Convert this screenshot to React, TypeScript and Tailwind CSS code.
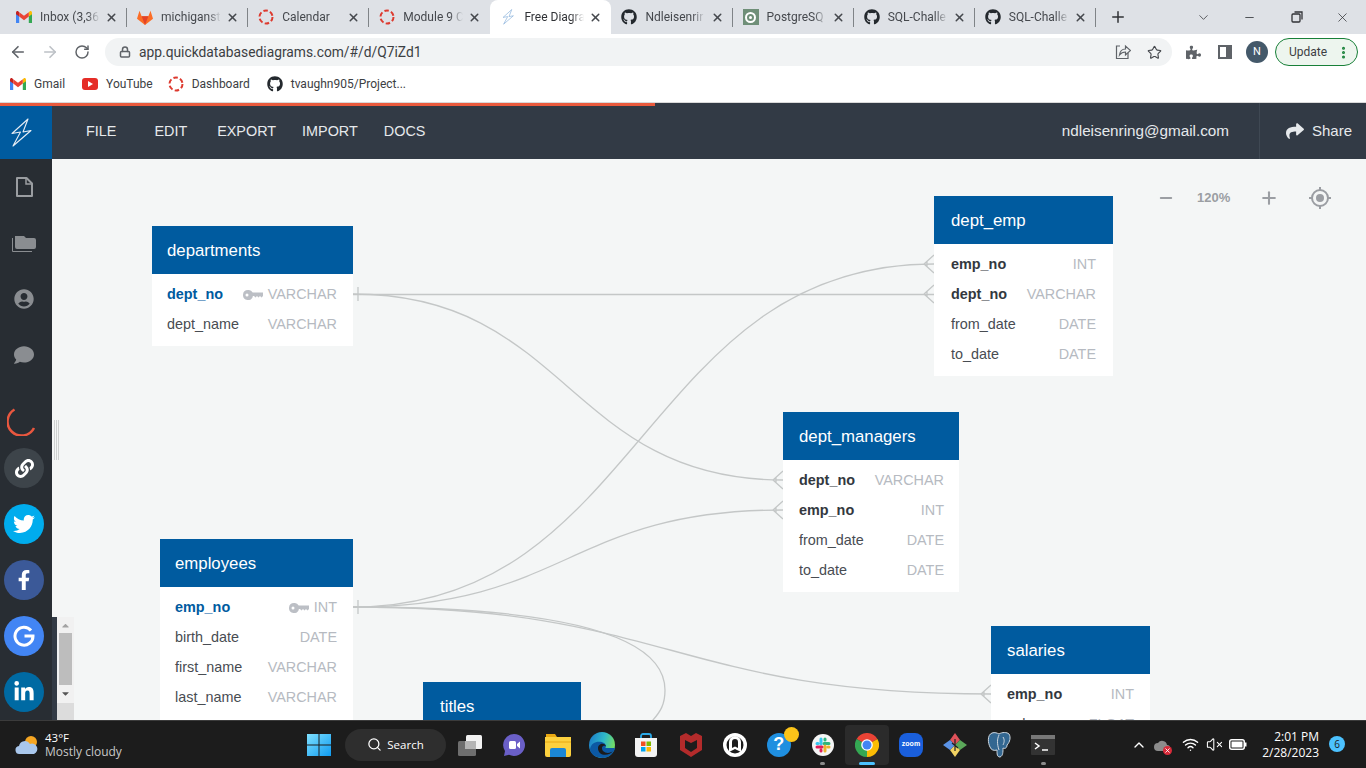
import { ArrowLeft, ArrowRight, ChevronDown, ChevronUp, Lock, Minus, MoreVertical, Plus, RotateCw, Search, Star, VolumeX, Wifi, X } from "lucide-react";
import { FaFacebookF, FaGithub, FaLinkedinIn, FaPuzzlePiece, FaShare, FaTwitter, FaUserCircle, FaComment, FaLink, FaCaretUp, FaCaretDown } from "react-icons/fa";
import { ReactNode } from "react";

const GmailIcon = ({ size = 16 }: { size?: number }) => (
  <svg width={size} height={size * 0.8} viewBox="0 0 20 16">
    <path d="M0 3v11.5A1.5 1.5 0 0 0 1.5 16H4V6z" fill="#4285f4" />
    <path d="M20 3v11.5a1.5 1.5 0 0 1-1.500 1.500H16V6z" fill="#34a853" />
    <path d="M16 1.500V7l4-3V2c0-1.800-2-2.500-3-1.500z" fill="#fbbc04" />
    <path d="M4 1.500V7L0 4V2C0 .2 2-.5 3 .5z" fill="#c5221f" />
    <path d="M4 1.500 10 6l6-4.500V7l-6 4.500L4 7z" fill="#ea4335" />
  </svg>
);

const GitlabIcon = () => (
  <svg width="18" height="17" viewBox="0 0 18 17">
    <path d="M9 17 0 10 2.800 1l2.400 6h7.600l2.400-6L18 10z" fill="#fc6d26" />
    <path d="M9 17 5.200 7h7.600z" fill="#e24329" />
  </svg>
);

const DashedRing = ({ size = 16 }: { size?: number }) => (
  <svg width={size} height={size} viewBox="0 0 16 16">
    <circle cx="8" cy="8" r="6.500" fill="none" stroke="#dd3a2f" strokeWidth="2" strokeDasharray="4.500 2.300" />
  </svg>
);

const BoltLogo = ({ size = 30, color = "#e8eef5" }: { size?: number; color?: string }) => (
  <svg width={size} height={size * 1.25} viewBox="0 0 24 30" fill="none" stroke={color} strokeWidth="1.100">
    <path d="M18 1 2 15.500l8.500-1.500L3 28 21 12.500l-8 1.500z" strokeLinejoin="round" />
  </svg>
);

const PgBox = () => (
  <span className="w-4 h-4 bg-[#6f8f78] flex items-center justify-center">
    <span className="w-[11px] h-[11px] rounded-full border-2 border-white flex items-center justify-center">
      <span className="w-[3px] h-[3px] rounded-full bg-white" />
    </span>
  </span>
);

const TABS: { title: string; icon: ReactNode; active?: boolean }[] = [
  { title: "Inbox (3,36", icon: <GmailIcon /> },
  { title: "michiganst", icon: <GitlabIcon /> },
  { title: "Calendar", icon: <DashedRing /> },
  { title: "Module 9 C", icon: <DashedRing /> },
  { title: "Free Diagra", icon: <BoltLogo size={13} color="#7aa7d6" />, active: true },
  { title: "Ndleisenrir", icon: <FaGithub size={16} color="#24292e" /> },
  { title: "PostgreSQ", icon: <PgBox /> },
  { title: "SQL-Challe", icon: <FaGithub size={16} color="#24292e" /> },
  { title: "SQL-Challe", icon: <FaGithub size={16} color="#24292e" /> },
];

type Column = { name: string; type: string; kind?: "pk" | "fk" };
type TableDef = { title: string; box: string; pad: string; rows: Column[] };

// canvas starts at x=52, y=159 of the page
const TABLES: TableDef[] = [
  {
    title: "departments",
    box: "left-[100px] top-[67px] w-[201px]",
    pad: "pl-[15px] pr-4",
    rows: [
      { name: "dept_no", type: "VARCHAR", kind: "pk" },
      { name: "dept_name", type: "VARCHAR" },
    ],
  },
  {
    title: "dept_emp",
    box: "left-[882px] top-[37px] w-[179px]",
    pad: "pl-[17px] pr-[17px]",
    rows: [
      { name: "emp_no", type: "INT", kind: "fk" },
      { name: "dept_no", type: "VARCHAR", kind: "fk" },
      { name: "from_date", type: "DATE" },
      { name: "to_date", type: "DATE" },
    ],
  },
  {
    title: "dept_managers",
    box: "left-[731px] top-[253px] w-[176px]",
    pad: "pl-4 pr-[15px]",
    rows: [
      { name: "dept_no", type: "VARCHAR", kind: "fk" },
      { name: "emp_no", type: "INT", kind: "fk" },
      { name: "from_date", type: "DATE" },
      { name: "to_date", type: "DATE" },
    ],
  },
  {
    title: "employees",
    box: "left-[108px] top-[380px] w-[193px]",
    pad: "pl-[15px] pr-4",
    rows: [
      { name: "emp_no", type: "INT", kind: "pk" },
      { name: "birth_date", type: "DATE" },
      { name: "first_name", type: "VARCHAR" },
      { name: "last_name", type: "VARCHAR" },
      { name: "gender", type: "VARCHAR" },
    ],
  },
  {
    title: "salaries",
    box: "left-[939px] top-[467px] w-[159px]",
    pad: "pl-4 pr-4",
    rows: [
      { name: "emp_no", type: "INT", kind: "fk" },
      { name: "salary", type: "FLOAT" },
    ],
  },
  {
    title: "titles",
    box: "left-[371px] top-[523px] w-[158px]",
    pad: "pl-[17px] pr-4",
    rows: [{ name: "title_id", type: "VARCHAR" }],
  },
];

const KeyIcon = () => (
  <svg width="20" height="10" viewBox="0 0 20 10" className="mr-[5px]">
    <path d="M5 0a5 5 0 0 1 4.700 2.500H20V6l-1.500 1.500L17 6l-1.500 1.500L14 6l-1.500 1.500L11 6H9.900A5 5 0 1 1 5 0zM4 3.500a1.500 1.500 0 1 0 0 3 1.500 1.500 0 0 0 0-3z" fill="#bcbfc5" fillRule="evenodd" />
  </svg>
);

function DbTable({ table }: { table: TableDef }) {
  return (
    <div className={`absolute ${table.box} bg-white font-['Liberation_Sans',sans-serif]`}>
      <div className={`h-12 bg-[#005b9f] text-white text-[16.800px] flex items-center pt-[2px] ${table.pad}`}>{table.title}</div>
      <div className="pt-[6px] pb-[6px]">
        {table.rows.map((row) => (
          <div key={row.name} className={`h-[30px] flex items-center text-[14.400px] ${table.pad}`}>
            <span
              className={
                row.kind === "pk"
                  ? "font-bold text-[#005b9f]"
                  : row.kind === "fk"
                    ? "font-bold text-[#33383e]"
                    : "text-[#484c52]"
              }
            >
              {row.name}
            </span>
            <span className="ml-auto flex items-center text-[#b6bac1]">
              {row.kind === "pk" && <KeyIcon />}
              {row.type}
            </span>
          </div>
        ))}
      </div>
    </div>
  );
}

const CrowFoot = ({ x, y }: { x: number; y: number }) => (
  <path d={`M${x - 10} ${y}L${x} ${y - 9}M${x - 10} ${y}L${x} ${y + 9}M${x - 7} ${y - 3}V${y + 3}`} />
);

function Relations() {
  return (
    <svg className="absolute inset-0" width="1314" height="561" viewBox="52 159 1314 561" fill="none" stroke="#c4c7c7" strokeWidth="1.300">
      <path d="M353 294.500H934" />
      <path d="M353 294C568 294 568 480 783 480" />
      <path d="M353 607C643 607 643 264 934 264" />
      <path d="M353 607C568 607 568 510 783 510" />
      <path d="M353 607C672 607 672 694 991 694" />
      <path d="M353 607C520 607 665 625 665 690C665 705 660 712 653 720L581 775" />
      <path d="M358 287V301" />
      <path d="M358 600V614" />
      <CrowFoot x={934} y={264} />
      <CrowFoot x={934} y={294} />
      <CrowFoot x={783} y={480} />
      <CrowFoot x={783} y={510} />
      <CrowFoot x={991} y={694} />
    </svg>
  );
}

const FileIcon = () => (
  <svg width="17" height="20" viewBox="0 0 17 20" fill="none" stroke="#9a9da1" strokeWidth="2">
    <path d="M1 1h9.500L16 6.500V19H1z" strokeLinejoin="round" />
    <path d="M10 1v6h6" strokeWidth="1.500" />
  </svg>
);

const FolderStack = () => (
  <svg width="24" height="20" viewBox="0 0 24 20">
    <path d="M3 3h9l2 2h8a2 2 0 0 1 2 2v7a2 2 0 0 1-2 2H5a2 2 0 0 1-2-2z" fill="#8a8d91" />
    <path d="M.500 5v13.500H20" fill="none" stroke="#8a8d91" />
  </svg>
);

const GoogleG = () => (
  <svg width="22" height="22" viewBox="0 0 22 22" fill="none" stroke="#fff" strokeWidth="3">
    <path d="M18 5.500A9 9 0 1 0 20 11h-8.500" />
  </svg>
);

function SocialDot({ className, children }: { className: string; children: ReactNode }) {
  return <div className={`w-10 h-10 rounded-full flex items-center justify-center text-white ${className}`}>{children}</div>;
}

function Sidebar() {
  return (
    <aside className="w-[52px] shrink-0 bg-[#282d33] flex flex-col items-center pt-[18px] text-[#8a8d91]">
      <div className="flex flex-col items-center gap-9 mr-[4px]">
        <FileIcon />
        <FolderStack />
        <FaUserCircle size={20} />
        <FaComment size={20} />
      </div>
      <svg width="30" height="30" viewBox="0 0 30 30" fill="none" stroke="#e9573f" strokeWidth="2.500" className="mt-[41px] mr-[8px]">
        <path d="M7.500 3.500A14 14 0 1 0 27 22" />
      </svg>
      <div className="mt-3 flex flex-col gap-4 mr-[4px]">
        <SocialDot className="bg-[#3d444a]"><FaLink size={19} /></SocialDot>
        <SocialDot className="bg-[#00aced]"><FaTwitter size={22} /></SocialDot>
        <SocialDot className="bg-[#3b5998]"><FaFacebookF size={20} /></SocialDot>
        <SocialDot className="bg-[#4285f4]"><GoogleG /></SocialDot>
        <SocialDot className="bg-[#006aa3]"><FaLinkedinIn size={22} /></SocialDot>
      </div>
    </aside>
  );
}

function Canvas() {
  return (
    <main className="relative flex-1 bg-[#f4f6f6] overflow-hidden font-['Liberation_Sans',sans-serif]">
      <Relations />
      {TABLES.map((t) => (
        <DbTable key={t.title} table={t} />
      ))}
      {/* zoom controls */}
      <div className="absolute top-[28px] left-[1105px] flex items-center text-[#9b9ea3]">
        <Minus size={18} strokeWidth={2.500} />
        <span className="ml-[22px] w-[40px] text-[13px] font-bold">120%</span>
        <Plus size={20} strokeWidth={2.500} className="ml-[22px]" />
        <svg width="22" height="22" viewBox="0 0 22 22" fill="none" stroke="currentColor" strokeWidth="2" className="ml-[30px]">
          <circle cx="11" cy="11" r="8" />
          <circle cx="11" cy="11" r="4" fill="currentColor" stroke="none" />
          <path d="M11 0v3M11 19v3M0 11h3M19 11h3" />
        </svg>
      </div>
      {/* panel splitter */}
      <div className="absolute left-[2px] top-[261px] h-10 w-[5px] flex justify-between">
        <span className="w-px bg-[#cfd2d2]" />
        <span className="w-px bg-[#cfd2d2]" />
        <span className="w-px bg-[#cfd2d2]" />
      </div>
      {/* embedded scroller */}
      <div className="absolute left-0 top-[458px] h-[103px] w-[22px] flex">
        <div className="w-[5px] bg-[#323a45]" />
        <div className="flex-1 flex flex-col">
          <div className="h-[86px] bg-[#f1f1f1] flex flex-col items-center text-[#a3a3a3]">
            <FaCaretUp size={11} className="mt-[3px] mb-[2px]" />
            <div className="w-[13px] h-[52px] bg-[#bdbdbd]" />
            <FaCaretDown size={11} className="mt-[3px] text-[#555]" />
          </div>
          <div className="flex-1 bg-[#dcdcdc]" />
        </div>
      </div>
    </main>
  );
}

/* ---- taskbar icons ---- */

const WindowsIcon = () => (
  <svg width="24" height="24" viewBox="0 0 24 24">
    <defs>
      <linearGradient id="win" x1="0" y1="0" x2="1" y2="1">
        <stop offset="0" stopColor="#7fe0ff" />
        <stop offset="1" stopColor="#0f9bf0" />
      </linearGradient>
    </defs>
    <path d="M0 1h11.500v10.500H0zM12.500 1H24v10.500H12.500zM0 12.500h11.500V23H0zM12.500 12.500H24V23H12.500z" fill="url(#win)" />
  </svg>
);

const TaskView = () => (
  <svg width="24" height="22" viewBox="0 0 24 22">
    <rect x="8" y="1" width="16" height="14" rx="1.500" fill="#f2f2f2" />
    <rect x="0" y="7" width="18" height="15" rx="1.500" fill="#6e6e6e" />
    <rect x="7" y="7" width="11" height="8" fill="#b5b5b5" />
  </svg>
);

const TeamsIcon = () => (
  <svg width="24" height="24" viewBox="0 0 24 24">
    <path d="M12 1a11 11 0 1 1-5 20.800L2 23l1-5A11 11 0 0 1 12 1z" fill="#6a5fc7" />
    <rect x="7" y="8" width="7" height="8" rx="1.500" fill="#fff" />
    <path d="M15 11l3-2.500v7L15 13z" fill="#fff" />
  </svg>
);

const ExplorerIcon = () => (
  <svg width="26" height="24" viewBox="0 0 26 24">
    <path d="M1 1h9l2 3h-11z" fill="#e8a812" />
    <path d="M0 4h26v18a2 2 0 0 1-2 2H2a2 2 0 0 1-2-2z" fill="#fcd13f" />
    <path d="M0 9h26" stroke="#e8a812" strokeWidth="1" />
    <path d="M5 17a2 2 0 0 1 2-2h12a2 2 0 0 1 2 2v7H5z" fill="#1b87d6" />
  </svg>
);

const EdgeIcon = () => (
  <svg width="26" height="26" viewBox="0 0 26 26">
    <defs>
      <linearGradient id="edge" x1="0" y1="0" x2="1" y2="0.300">
        <stop offset="0" stopColor="#1976c9" />
        <stop offset="0.600" stopColor="#2fb9c9" />
        <stop offset="1" stopColor="#6fdb6a" />
      </linearGradient>
    </defs>
    <circle cx="13" cy="13" r="13" fill="url(#edge)" />
    <path d="M1 17C2 10 10 8 15 11c3 2 2 5 1 5h10c-1 6-7 10-12 10C7 26 1 22 1 17z" fill="#0c59a4" />
    <path d="M9 16c0-4 6-6 8-2-4-1-5 2-3 5 3 3 8 2 10 0-3 5-15 6-15-3z" fill="#1b1b1b" />
  </svg>
);

const StoreIcon = () => (
  <svg width="24" height="24" viewBox="0 0 24 24">
    <path d="M7 6V3a2 2 0 0 1 2-2h6a2 2 0 0 1 2 2v3" fill="none" stroke="#2aa9e8" strokeWidth="1.800" />
    <path d="M1 5h22v16a3 3 0 0 1-3 3H4a3 3 0 0 1-3-3z" fill="#f3f3f3" />
    <rect x="7" y="8.500" width="4.500" height="4.500" fill="#f25022" />
    <rect x="12.500" y="8.500" width="4.500" height="4.500" fill="#7fba00" />
    <rect x="7" y="14" width="4.500" height="4.500" fill="#00a4ef" />
    <rect x="12.500" y="14" width="4.500" height="4.500" fill="#ffb900" />
  </svg>
);

const McafeeIcon = () => (
  <svg width="22" height="24" viewBox="0 0 22 24">
    <path d="M0 3l6-3 5 3 5-3 6 3v14l-11 7L0 17z" fill="#b32b2b" />
    <path d="M5 7l6 3 6-3v8l-6 4-6-4z" fill="#1c1c1c" />
  </svg>
);

const ArchIcon = () => (
  <svg width="24" height="24" viewBox="0 0 24 24" fill="none">
    <circle cx="12" cy="12" r="12" fill="#fff" />
    <circle cx="12" cy="12" r="8.500" fill="#1c1c1c" />
    <path d="M6 19V9a6 6 0 0 1 12 0v10l-6-3z" fill="#fff" />
    <path d="M9 15V9a3 3 0 0 1 6 0v6l-3-1.500z" fill="#1c1c1c" />
  </svg>
);

const HelpIcon = () => (
  <span className="relative flex w-6 h-6 items-center justify-center rounded-full bg-[#1f8fe0] text-white text-[18px] font-bold font-['Liberation_Sans',sans-serif]">
    ?
    <span className="absolute -top-[6px] -right-[8px] w-[15px] h-[15px] rounded-full bg-[#fcc419]" />
  </span>
);

const SlackIcon = () => (
  <svg width="22" height="22" viewBox="0 0 22 22" fill="none" strokeWidth="3" strokeLinecap="round">
    <circle cx="11" cy="11" r="11" fill="#f5f5f5" />
    <path d="M9 5v5M5 9.500h1" stroke="#36c5f0" />
    <path d="M17 9.500h-5M13 5v1" stroke="#2eb67d" />
    <path d="M13 17v-5M17 13h-1" stroke="#ecb22e" />
    <path d="M5 13h5M9 17v-1" stroke="#e01e5a" />
  </svg>
);

const ChromeIcon = () => (
  <svg width="24" height="24" viewBox="0 0 24 24">
    <path d="M12 12L1.600 6A12 12 0 0 1 22.400 6z" fill="#ea4335" />
    <path d="M12 12L22.400 6A12 12 0 0 1 12 24z" fill="#fbbc04" />
    <path d="M12 12L12 24A12 12 0 0 1 1.600 6z" fill="#34a853" />
    <circle cx="12" cy="12" r="5.800" fill="#fff" />
    <circle cx="12" cy="12" r="4.500" fill="#4285f4" />
  </svg>
);

const ZoomIcon = () => (
  <span className="w-6 h-6 rounded-lg bg-[#1a5fdc] flex items-center justify-center text-white text-[7px] font-bold font-['Liberation_Sans',sans-serif]">
    zoom
  </span>
);

const GitkrakenIcon = () => (
  <svg width="24" height="24" viewBox="0 0 24 24">
    <path d="M12 0l5 7-5 5-5-5z" fill="#e0525a" />
    <path d="M12 12l5-5 7 5-7 5z" fill="#5ba85a" />
    <path d="M12 12l5 5-5 7-5-7z" fill="#f2d262" />
    <path d="M12 12l-5 5-7-5 7-5z" fill="#5b93e6" />
    <path d="M12 6v12M9 10l6 5" stroke="#222" strokeWidth="1.200" />
  </svg>
);

const PostgresIcon = () => (
  <svg width="24" height="26" viewBox="0 0 24 26">
    <path d="M5 1c3-1 5 0 7 1 3-2 8-2 10 0 2 3 1 8-2 11 0 3-2 4-4 3 0 4 0 8-3 9-3 0-3-3-3-7-3 1-6 0-7-3C1 11 0 3 5 1z" fill="#336791" stroke="#cfd8e0" strokeWidth="1" />
    <path d="M12 3c-2 4-2 9 0 15M16 5c2 3 1 6 0 8" fill="none" stroke="#cfd8e0" strokeWidth="1" />
  </svg>
);

const TerminalIcon = () => (
  <svg width="24" height="20" viewBox="0 0 24 20">
    <rect width="24" height="20" rx="1" fill="#333" />
    <rect width="24" height="4" fill="#777" />
    <path d="M4 8l4 3-4 3" fill="none" stroke="#fff" strokeWidth="1.500" />
    <path d="M11 15h6" stroke="#fff" strokeWidth="1.500" />
  </svg>
);

const TASK_ICONS: { icon: ReactNode; dot?: boolean; active?: boolean }[] = [
  { icon: <TaskView /> },
  { icon: <TeamsIcon /> },
  { icon: <ExplorerIcon /> },
  { icon: <EdgeIcon /> },
  { icon: <StoreIcon /> },
  { icon: <McafeeIcon /> },
  { icon: <ArchIcon /> },
  { icon: <HelpIcon /> },
  { icon: <SlackIcon />, dot: true },
  { icon: <ChromeIcon />, active: true },
  { icon: <ZoomIcon /> },
  { icon: <GitkrakenIcon /> },
  { icon: <PostgresIcon /> },
  { icon: <TerminalIcon />, dot: true },
];

function Taskbar() {
  return (
    <footer className="relative h-12 shrink-0 bg-[#1c1c1c] border-t border-[#3b3b3b] flex items-center text-white font-['Open_Sans',sans-serif]">
      <div className="w-[297px] flex items-center pl-[15px] gap-[6px]">
        <svg width="24" height="22" viewBox="0 0 24 22">
          <circle cx="16" cy="8" r="6" fill="#f5a623" />
          <path d="M5 20a4 4 0 0 1-1-8 6 6 0 0 1 11-2 5 5 0 0 1 4 10z" fill="#a9c7ec" />
        </svg>
        <div className="leading-[14px]">
          <div className="text-[11.500px]">43°F</div>
          <div className="text-[12px] text-[#c8c8c8]">Mostly cloudy</div>
        </div>
      </div>
      <div className="w-[44px] flex justify-center"><WindowsIcon /></div>
      <div className="ml-[4px] w-[101px] h-8 rounded-full bg-[#2e2e2e] flex items-center justify-center gap-[5px] text-[11.500px]">
        <Search size={15} strokeWidth={2} />
        Search
      </div>
      <div className="ml-[2px] flex">
        {TASK_ICONS.map((t, i) => (
          <div
            key={i}
            className={`relative w-[44.100px] h-10 flex items-center justify-center rounded ${t.active ? "bg-[#2b2b2b]" : ""}`}
          >
            {t.icon}
            {t.dot && <span className="absolute bottom-0 w-[5px] h-[3px] rounded-full bg-[#8c8c8c]" />}
            {t.active && <span className="absolute bottom-0 w-4 h-[3px] rounded-full bg-[#4cc2ff]" />}
          </div>
        ))}
      </div>
      <div className="ml-auto flex items-center pr-[47px]">
        <ChevronUp size={16} />
        <span className="relative ml-[7px] w-[18px] h-4">
          <svg width="16" height="12" viewBox="0 0 16 12" className="absolute top-[2px] left-0">
            <path d="M4 12a4 4 0 0 1 0-8 5 5 0 0 1 9 2 3 3 0 0 1 0 6z" fill="#8c8c8c" />
          </svg>
          <span className="absolute -bottom-[2px] right-0 w-[9px] h-[9px] rounded-full bg-[#d92b3a] flex items-center justify-center">
            <X size={7} strokeWidth={3} />
          </span>
        </span>
        <Wifi size={17} className="ml-[10px]" />
        <VolumeX size={17} strokeWidth={1.500} className="ml-[7px]" />
        <svg width="18" height="11" viewBox="0 0 18 11" className="ml-[6px]">
          <rect x=".750" y=".750" width="14.500" height="9.500" rx="2" fill="none" stroke="#fff" strokeWidth="1.500" />
          <rect x="2.500" y="2.500" width="11" height="6" fill="#fff" />
          <rect x="16" y="3.500" width="1.500" height="4" fill="#fff" />
        </svg>
        <div className="ml-[15px] text-right text-[12px] leading-[16px]">
          <div>2:01 PM</div>
          <div>2/28/2023</div>
        </div>
      </div>
      <span className="absolute right-[21px] top-[15px] w-4 h-4 rounded-full bg-[#4cc2ff] text-[#1c1c1c] text-[10px] flex items-center justify-center">6</span>
    </footer>
  );
}

function TabStrip() {
  return (
    <div className="h-[34px] shrink-0 bg-[#dee1e6] flex items-end pl-[6px] text-[12px] text-[#45484d]">
      {TABS.map((tab, i) => (
        <div
          key={i}
          className={`relative w-[121.100px] h-[34px] flex items-center pl-[10px] pr-[9px] ${
            tab.active ? "bg-white rounded-t-lg text-[#303236]" : ""
          }`}
        >
          <span className="w-4 h-4 flex items-center justify-center shrink-0">{tab.icon}</span>
          <span className="ml-[8px] w-[60px] overflow-hidden whitespace-nowrap [mask-image:linear-gradient(to_right,black_78%,transparent)]">
            {tab.title}
          </span>
          <X size={13} strokeWidth={2.800} className="ml-auto text-[#45484d]" />
          {!tab.active && i !== 3 && <span className="absolute right-0 top-[8px] h-[19px] w-px bg-[#7f8387]" />}
        </div>
      ))}
      <div className="ml-[13px] h-[34px] flex items-center text-[#303236]">
        <Plus size={18} strokeWidth={2} />
      </div>
      <div className="ml-auto h-[34px] flex items-center text-[#303236]">
        <ChevronDown size={15} strokeWidth={1.200} />
        <Minus size={13} strokeWidth={1.500} className="ml-[32px]" />
        <svg width="12" height="12" viewBox="0 0 12 12" fill="none" stroke="currentColor" strokeWidth="1.300" className="ml-[35px]">
          <rect x="1" y="3" width="8" height="8" rx="1" />
          <path d="M3.500 1H11v7.500" />
        </svg>
        <X size={15} strokeWidth={1.200} className="ml-[32px] mr-4" />
      </div>
    </div>
  );
}

function Toolbar() {
  return (
    <div className="h-[34px] shrink-0 bg-white flex items-center pt-[2px] text-[#5f6368]">
      <ArrowLeft size={18} strokeWidth={2.200} className="ml-[9px]" />
      <ArrowRight size={18} strokeWidth={2.200} className="ml-[14px] text-[#bdc1c6]" />
      <RotateCw size={16} strokeWidth={2.200} className="ml-[15px]" />
      <div className="ml-[15px] w-[1067px] h-7 rounded-full bg-[#f1f3f4] flex items-center pl-[14px] pr-[10px]">
        <Lock size={12} strokeWidth={3} className="text-[#5f6368]" />
        <span className="ml-[8px] text-[13.800px] text-[#3c4043]">app.quickdatabasediagrams.com/#/d/Q7iZd1</span>
        <svg width="16" height="16" viewBox="0 0 16 16" fill="none" stroke="currentColor" strokeWidth="1.200" className="ml-auto mr-4">
          <path d="M5 2H1.500v12.500H13V9" />
          <path d="M4.500 11c.5-4 3-6 6-6V2l5 4.500-5 4.500V8c-2.500 0-4.500 1-6 3z" />
        </svg>
        <Star size={15} strokeWidth={1.800} className="text-[#45484d]" />
      </div>
      <FaPuzzlePiece size={15} className="ml-[14px] text-[#5f6368]" />
      <span className="ml-[17px] w-[14px] h-[14px] border-2 border-[#5f6368] border-r-[6px]" />
      <span className="ml-[14px] w-[22px] h-[22px] rounded-full bg-[#44596a] text-white text-[11px] flex items-center justify-center">N</span>
      <div className="ml-[7px] w-[83px] h-7 rounded-full border border-[#188038] bg-[#edf5ee] flex items-center pl-[13px] text-[12px] text-[#3c4043]">
        Update
        <MoreVertical size={15} strokeWidth={2.800} className="ml-auto mr-[6px] text-[#188038]" />
      </div>
    </div>
  );
}

function Bookmark({ icon, label, className }: { icon: ReactNode; label: string; className: string }) {
  return (
    <div className={`flex items-center ${className}`}>
      <span className="w-4 h-4 flex items-center justify-center">{icon}</span>
      <span className="ml-[8px]">{label}</span>
    </div>
  );
}

function Bookmarks() {
  return (
    <div className="h-[35px] shrink-0 bg-white border-b border-[#d9d9d9] flex items-center pl-[10px] pb-[2px] text-[12px] text-[#3c4043]">
      <Bookmark icon={<GmailIcon />} label="Gmail" className="" />
      <Bookmark
        icon={
          <span className="w-4 h-[12px] rounded-[3px] bg-[#e52d27] flex items-center justify-center">
            <span className="border-l-[5px] border-l-white border-y-[3px] border-y-transparent" />
          </span>
        }
        label="YouTube"
        className="ml-[17px]"
      />
      <Bookmark icon={<DashedRing />} label="Dashboard" className="ml-[15px]" />
      <Bookmark icon={<FaGithub size={16} color="#24292e" />} label="tvaughn905/Project..." className="ml-[17px]" />
    </div>
  );
}

function NavBar() {
  return (
    <header className="relative h-14 shrink-0 bg-[#323a45] flex items-center text-[#e6e9ec] font-['Liberation_Sans',sans-serif]">
      <div className="absolute left-0 top-0 h-[3px] w-[655px] bg-[#ea5a3d]" />
      <div className="w-[52px] h-14 bg-[#005b9f] flex items-center justify-center pt-[3px] pr-2">
        <BoltLogo size={24} />
      </div>
      <nav className="ml-[34px] pt-[2px] flex text-[14.400px]">
        <span>FILE</span>
        <span className="ml-[38px]">EDIT</span>
        <span className="ml-[30px]">EXPORT</span>
        <span className="ml-[26px]">IMPORT</span>
        <span className="ml-[26px]">DOCS</span>
      </nav>
      <span className="ml-auto text-[15.250px]">ndleisenring@gmail.com</span>
      <div className="ml-[30px] h-14 w-[107px] border-l border-[#3f4853] flex items-center pl-[26px] text-[15px] shrink-0">
        <FaShare size={18} className="shrink-0" />
        <span className="ml-[8px]">Share</span>
      </div>
    </header>
  );
}

export default function App() {
  return (
    <div className="w-[1366px] h-[768px] flex flex-col overflow-hidden bg-white font-['Roboto',sans-serif]">
      <TabStrip />
      <Toolbar />
      <Bookmarks />
      <NavBar />
      <div className="flex-1 flex min-h-0">
        <Sidebar />
        <Canvas />
      </div>
      <Taskbar />
    </div>
  );
}
